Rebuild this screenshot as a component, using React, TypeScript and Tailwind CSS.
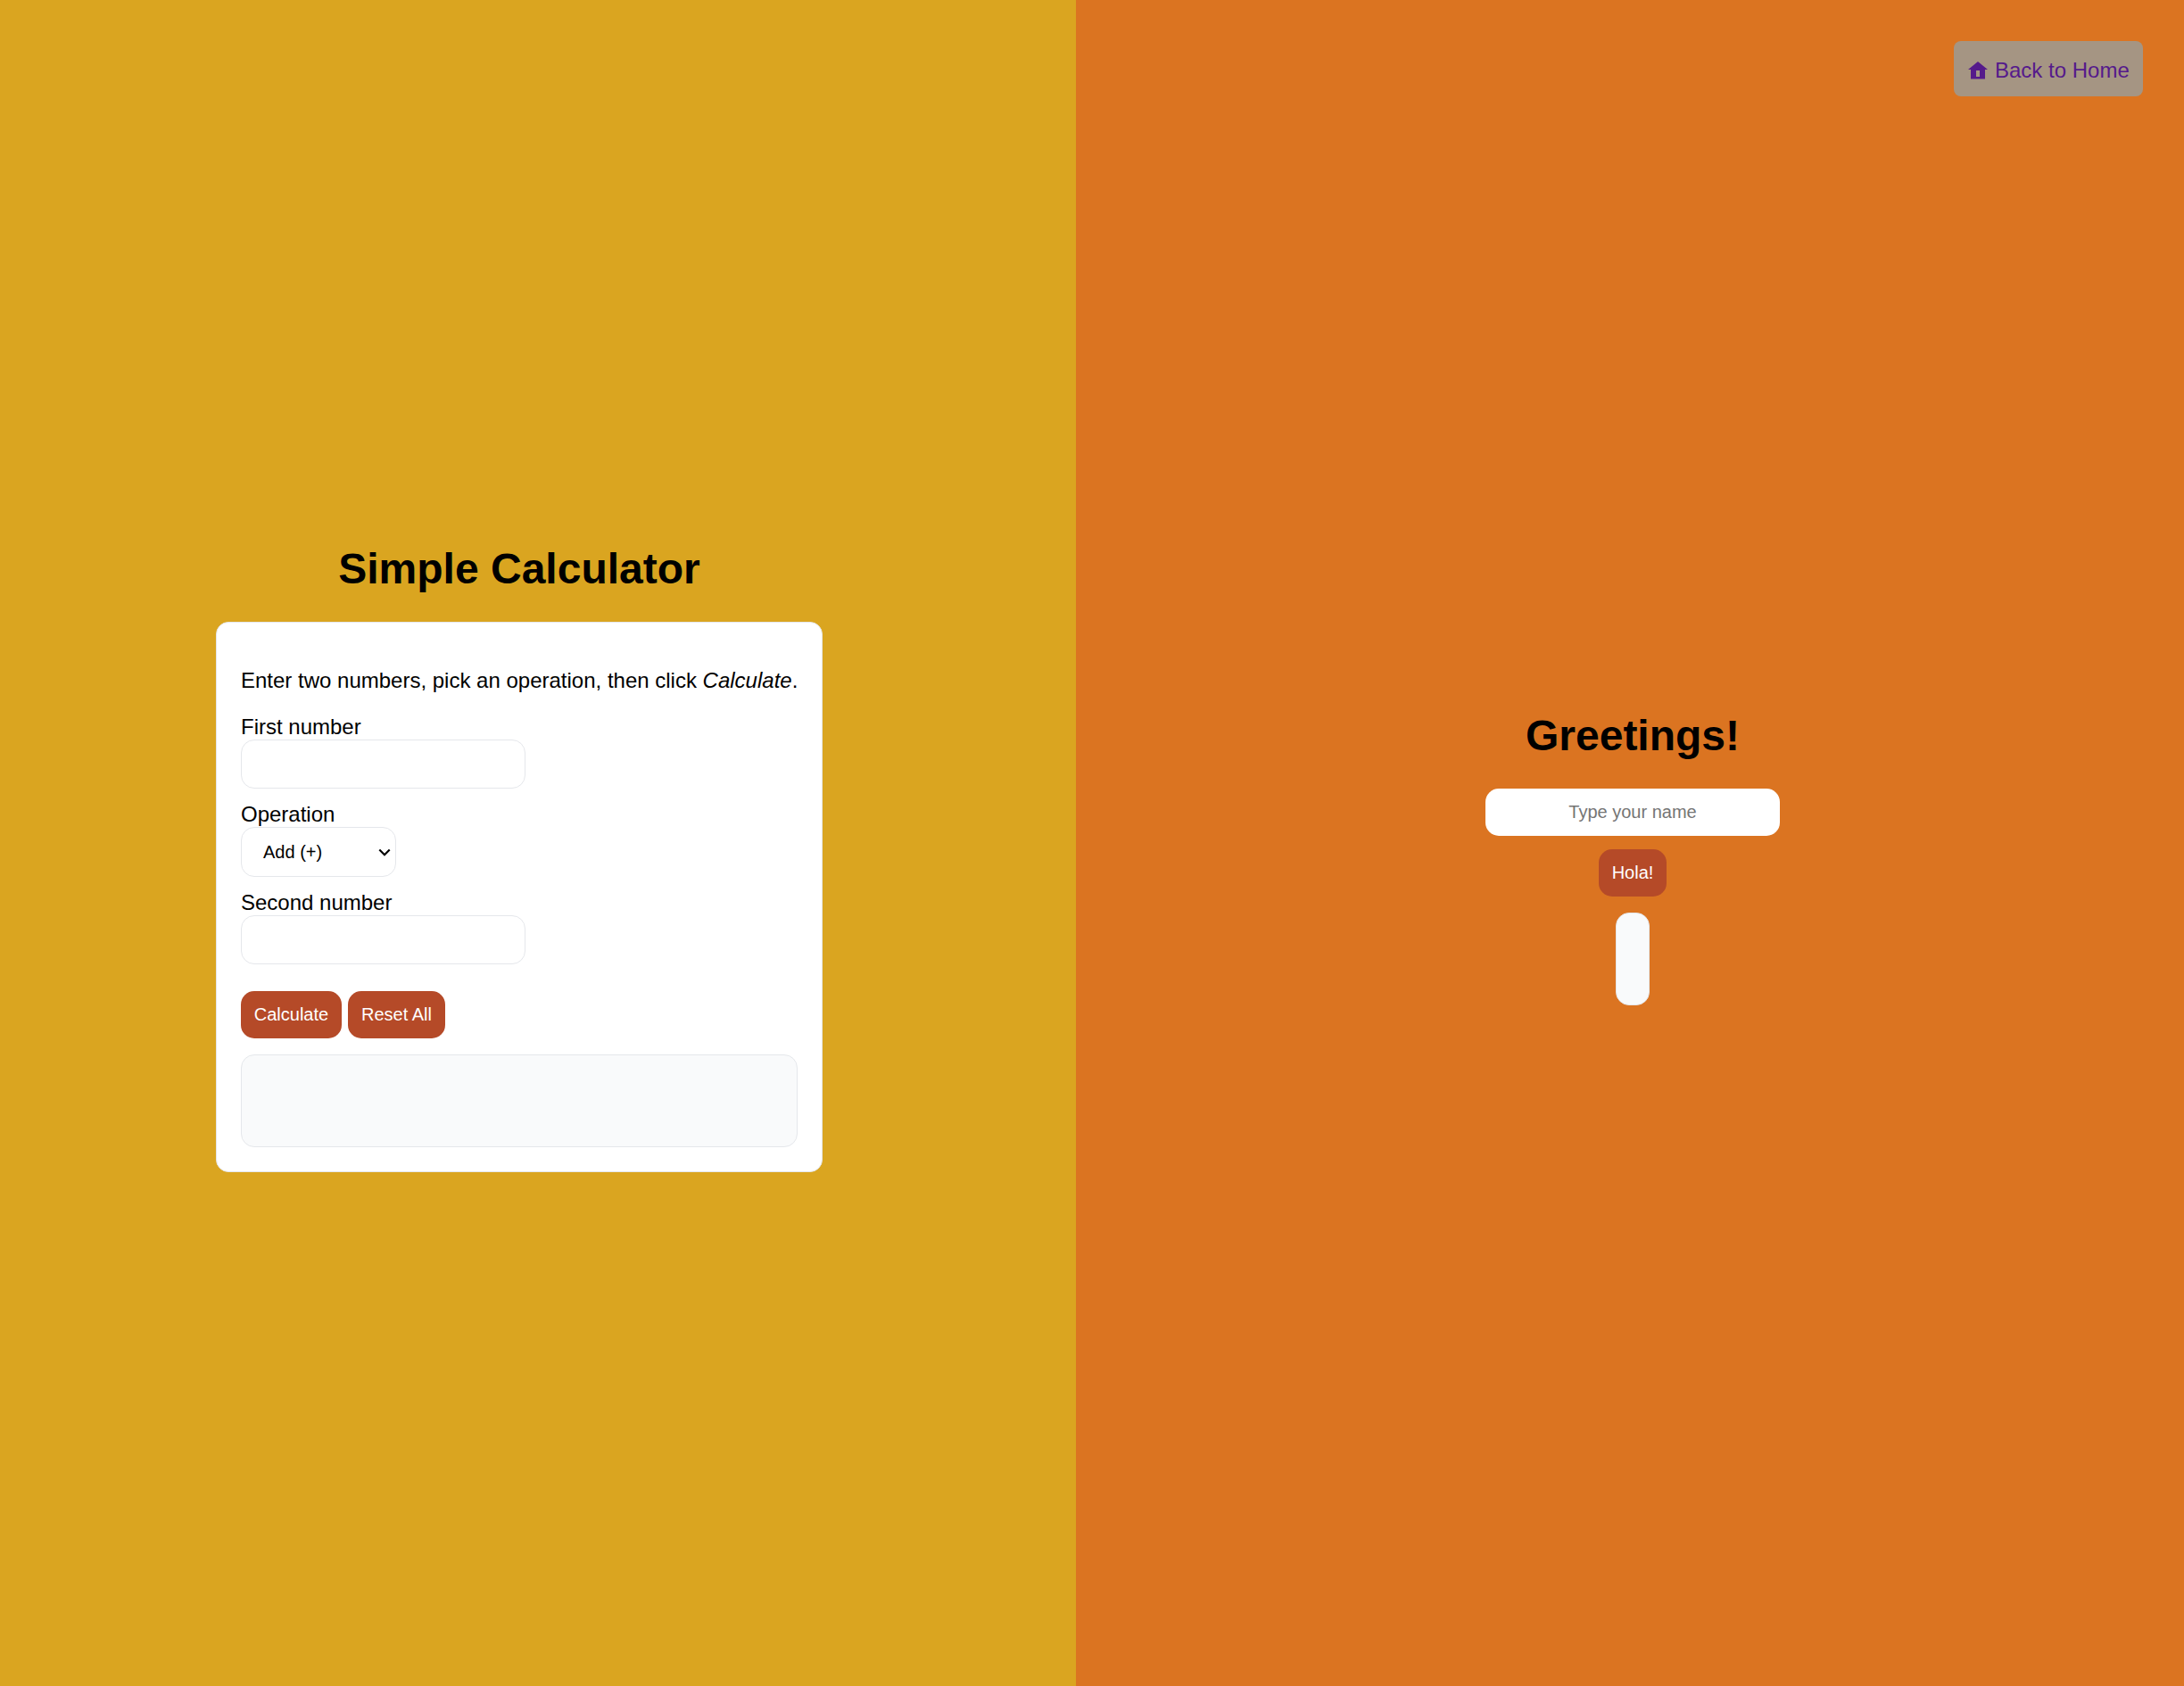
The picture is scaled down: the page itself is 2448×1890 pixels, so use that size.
import React from "react";

function HomeIcon() {
  return (
    <svg className="mt-[23px] h-5 w-[22px] shrink-0" viewBox="0 0 22 20" fill="currentColor">
      <path fillRule="evenodd" d="M11 0 L22 9 H19 V19.5 H3 V9 H0 Z M9 10 V17 H13 V10 Z" />
    </svg>
  );
}

function NumberField({ label }: { label: string }) {
  return (
    <label className="flex flex-col">
      <span className="h-7 leading-[27px]">{label}</span>
      <input className="h-[55px] w-[319px] rounded-[15px] border border-gray-200 bg-white px-6 text-[20px] outline-none" />
    </label>
  );
}

function ActionButton({ children, width }: { children: React.ReactNode; width: string }) {
  return (
    <button className={`h-[53px] rounded-[15px] bg-[#b54a28] text-center text-[20px] leading-[23px] whitespace-nowrap text-white ${width}`}>
      {children}
    </button>
  );
}

function Calculator() {
  return (
    <section className="flex w-[1206px] shrink-0 flex-col items-center bg-[#daa520] pt-[610px] pr-[42px]">
      <h1 className="text-[48px] leading-[55px] font-bold">Simple Calculator</h1>
      <div className="mt-8 flex h-[617px] w-[680px] flex-col rounded-[14px] border border-gray-200 bg-white px-[27px] pt-[51px]">
        <p className="leading-[27px] whitespace-nowrap">
          Enter two numbers, pick an operation, then click <em>Calculate</em>.
        </p>
        <div className="mt-[25px] flex flex-col gap-[15px]">
          <NumberField label="First number" />
          <label className="flex flex-col">
            <span className="h-7 leading-[27px]">Operation</span>
            <span className="flex h-14 w-[174px] items-center justify-between rounded-[15px] border border-gray-200 bg-white pr-[5px] pl-6 text-[20px] leading-[23px]">
              Add (+)
              <svg className="h-[9px] w-[14px]" viewBox="0 0 14 9" fill="none" stroke="currentColor" strokeWidth="2.2">
                <path d="M1.3 1.5 L7 7.2 L12.7 1.5" />
              </svg>
            </span>
          </label>
          <NumberField label="Second number" />
        </div>
        <div className="mt-[30px] flex gap-[7px]">
          <ActionButton width="w-[113px]">Calculate</ActionButton>
          <ActionButton width="w-[109px]">Reset All</ActionButton>
        </div>
        <div className="mt-[18px] h-[104px] rounded-[15px] border border-gray-200 bg-gray-50" />
      </div>
    </section>
  );
}

function Greeting() {
  return (
    <section className="flex flex-1 flex-col bg-[#db7421]">
      <nav className="flex justify-end pt-[46px] pr-[46px]">
        <a className="flex h-[62px] w-[212px] gap-2 rounded-lg bg-[#a59583] pl-4 whitespace-nowrap text-[#551a8b]">
          <HomeIcon />
          <span className="mt-[19px] leading-[27px]">Back to Home</span>
        </a>
      </nav>
      <div className="mt-[689px] flex flex-col items-center pl-[6px]">
        <h1 className="text-[48px] leading-[55px] font-bold">Greetings!</h1>
        <input
          className="mt-8 h-[53px] w-[330px] rounded-[15px] bg-white text-center text-[20px] outline-none placeholder:text-[#757575]"
          placeholder="Type your name"
        />
        <div className="mt-[15px] flex">
          <ActionButton width="w-[76px]">Hola!</ActionButton>
        </div>
        <div className="mt-[18px] h-[104px] w-[38px] rounded-[15px] border border-gray-200 bg-gray-50" />
      </div>
    </section>
  );
}

export default function App() {
  return (
    <main className="flex h-[1890px] w-[2448px] overflow-hidden font-['Liberation_Sans',Arial,sans-serif] text-[24px] text-black">
      <Calculator />
      <Greeting />
    </main>
  );
}
